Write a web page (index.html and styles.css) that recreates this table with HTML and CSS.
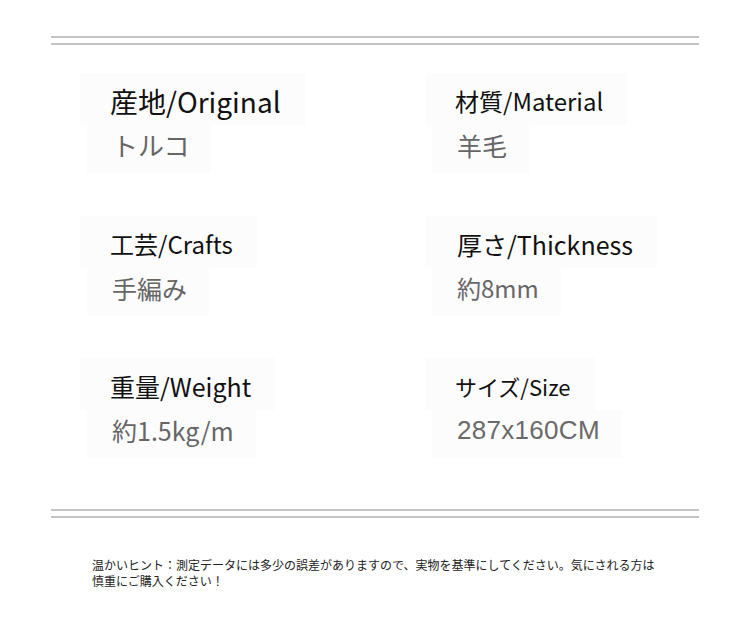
FILE: index.html
```html
<!DOCTYPE html>
<html lang="ja">
<head>
<meta charset="utf-8">
<link rel="stylesheet" href="styles.css">
</head>
<body>
<div class="page">
  <div class="rule"></div>
  <div class="specs">
    <div class="item">
      <span class="label fs-28">産地/Original</span>
      <span class="value fs-26">トルコ</span>
    </div>
    <div class="item">
      <span class="label fs-24">材質/Material</span>
      <span class="value fs-25">羊毛</span>
    </div>
    <div class="item">
      <span class="label fs-24">工芸/Crafts</span>
      <span class="value fs-25">手編み</span>
    </div>
    <div class="item">
      <span class="label fs-25 shift">厚さ/Thickness</span>
      <span class="value fs-24">約8mm</span>
    </div>
    <div class="item">
      <span class="label fs-25">重量/Weight</span>
      <span class="value fs-25">約1.5kg/m</span>
    </div>
    <div class="item">
      <span class="label fs-22">サイズ/Size</span>
      <span class="value latin">287x160CM</span>
    </div>
  </div>
  <div class="rule"></div>
  <p class="note">温かいヒント：測定データには多少の誤差がありますので、実物を基準にしてください。気にされる方は<br>慎重にご購入ください！</p>
</div>
</body>
</html>
```

FILE: styles.css
```css
* { box-sizing: border-box; }
html, body { margin: 0; padding: 0; background: #ffffff; }
body {
  font-family: "Noto Sans CJK JP", "Noto Sans", sans-serif;
  color: #111;
}
.page {
  width: 750px;
  height: 628px;
  padding: 36px 51px 0 51px;
}
.rule {
  height: 9px;
  border-top: 2px solid #c4c4c4;
  border-bottom: 2px solid #c4c4c4;
}
.specs {
  display: grid;
  grid-template-columns: 345px 1fr;
  row-gap: 42.5px;
  padding: 28px 0 51px 29px;
}
.item {
  display: flex;
  flex-direction: column;
  align-items: flex-start;
}
.label {
  display: inline-block;
  line-height: 40px;
  padding: 8px 24px 4px 30px;
  background: #fcfcfc;
  color: #111;
  white-space: nowrap;
}
.label.shift { padding-left: 32px; }
.value {
  display: inline-block;
  line-height: 40px;
  padding: 0 22px 8px 25px;
  margin-left: 7px;
  background: #fcfcfc;
  color: #666;
  white-space: nowrap;
}
.fs-28 { font-size: 28px; }
.fs-26 { font-size: 26px; }
.fs-25 { font-size: 25px; }
.fs-24 { font-size: 24px; }
.fs-22 { font-size: 22px; }
.latin {
  font-family: "Liberation Sans", Arial, sans-serif;
  font-size: 26px;
  letter-spacing: 0.3px;
  color: #6a6a6a;
}
.note {
  margin: 39px 0 0 41px;
  font-size: 12px;
  line-height: 16px;
  color: #222;
}
```
